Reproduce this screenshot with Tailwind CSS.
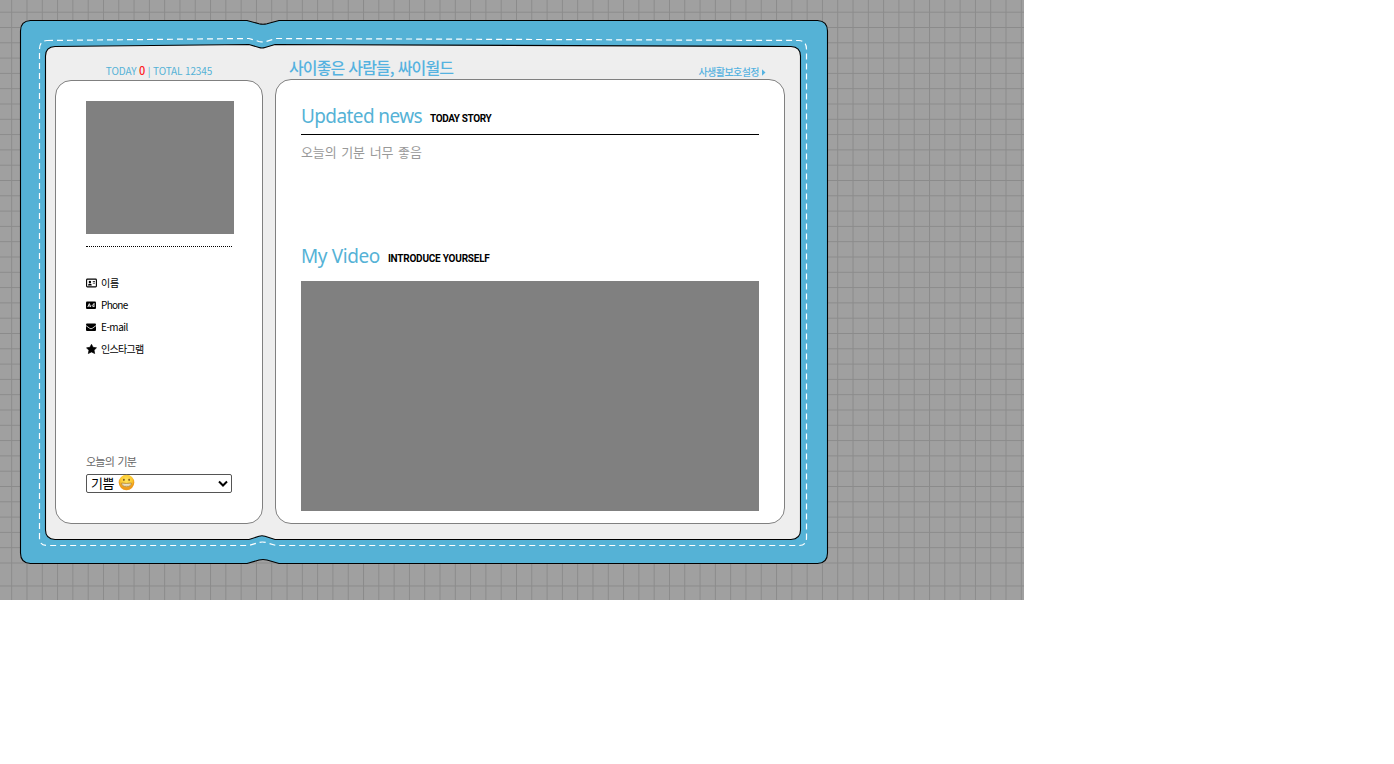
<!DOCTYPE html>
<html lang="ko">
<head>
<meta charset="utf-8">
<title>Mini homepage</title>
<script src="https://cdn.jsdelivr.net/npm/@tailwindcss/browser@4"></script>
</head>
<body class="bg-white overflow-hidden font-['Noto_Sans_CJK_KR',sans-serif]">
<div class="relative w-[1024px] h-[600px] overflow-hidden bg-[#a0a0a0]">
  <svg class="absolute inset-0" width="1024" height="600" fill="none">
    <defs>
      <pattern id="v" x="11.200" y="0" width="15.297" height="600" patternUnits="userSpaceOnUse"><rect width="1" height="600" fill="#8b8b8b"/></pattern>
      <pattern id="h" x="0" y="11.700" width="1024" height="15.300" patternUnits="userSpaceOnUse"><rect width="1024" height="1" fill="#8b8b8b"/></pattern>
    </defs>
    <rect width="1024" height="600" fill="url(#v)"/>
    <rect width="1024" height="565" fill="url(#h)"/>
    <path d="M0 586H1024" stroke="#8b8b8b"/>
    <path d="M30.500 20.500H247L259 23.800Q263 24.800 267 23.800L279 20.500H817.500Q827.500 21 827.500 31V553Q827.500 563 817.500 563.500H279L267 560Q263 559 259 560L247 563.500H30.500Q20.500 563 20.500 553V31Q20.500 21 30.500 20.500Z" fill="#55b2d6" stroke="#000" stroke-width="1.1"/>
    <path d="M47 40.500L249 38.500L259 41.500Q263 42.500 266 41.500L276 38.500L799 40.500Q806.500 41 806.500 49V538Q806.500 545.500 799 545.500H276L266 542.500Q262 541.500 259 542.500L249 545.500H47Q39.500 545.500 39.500 538V49Q39.500 41 47 40.500Z" stroke="#fff" stroke-width="1.2" stroke-dasharray="6 4"/>
    <path d="M55 46.500L249 44.500L259 47.500Q262 48.500 265 47.500L275 44.500L791 46.500Q800.500 47 800.500 56V530Q800.500 539 791 539.500H275L265 536.300Q262 535.300 259 536.300L249 539.500H55Q45.500 539 45.500 530V56Q45.500 47 55 46.500Z" fill="#eee" stroke="#000" stroke-width="1.1"/>
  </svg>

  <main class="relative flex gap-3 pl-[55px] pt-[58px]">
    <aside class="w-[208px]">
      <p class="flex h-[22px] items-center justify-center pt-[2px] text-[10px] leading-none tracking-[-0.13px] text-[#55b2d6] whitespace-pre"><span>TODAY <span class="text-[11px] font-medium text-[#f22]">0</span> | TOTAL 12345</span></p>
      <section class="flex h-[444px] w-[208px] flex-col rounded-[16px] border border-[#808080] bg-white pl-[30px] pt-5">
        <div class="h-[133px] w-[148px] bg-[#808080]"></div>
        <div class="mt-3 w-[146px] border-t border-dotted border-black"></div>
        <ul class="mt-[25px] text-[10px] leading-[22px] text-black">
          <li class="flex h-[22px] items-center gap-1">
            <svg width="11" height="10" viewBox="0 0 11 10"><rect x=".6" y="1.100" width="9.800" height="7.800" rx=".8" fill="none" stroke="#000" stroke-width="1.100"/><circle cx="3.900" cy="3.900" r="1.200"/><path d="M2 7.400Q2 5.500 3.900 5.500T5.800 7.400ZM6.800 3H9V3.800H6.800ZM6.800 4.700H9V5.500H6.800Z"/></svg>
            <span class="tracking-[-0.3px]">이름</span></li>
          <li class="flex h-[22px] items-center gap-1">
            <svg width="11" height="10" viewBox="0 0 11 10"><rect y="1.500" width="10" height="7.500" rx="1"/><path d="M1.800 7L3.300 3.600L4.800 7M2.400 6H4.200M8 3V7M8 5.200A.9 .9 0 1 0 8 6" fill="none" stroke="#fff" stroke-width=".9"/></svg>
            <span class="tracking-[-0.7px]">Phone</span></li>
          <li class="flex h-[22px] items-center gap-1">
            <svg width="11" height="10" viewBox="0 0 11 10"><rect y="1.500" width="10" height="7.500" rx="1"/><path d="M0 3.600L3.700 6.300Q5 7.200 6.300 6.300L10 3.600" fill="none" stroke="#fff" stroke-width=".8"/></svg>
            <span class="tracking-[-0.5px]">E-mail</span></li>
          <li class="flex h-[22px] items-center gap-1">
            <svg width="11" height="10" viewBox="0 0 11 10"><path d="M5.500 .3L7.100 3.300L10.500 3.800L8.100 6.200L8.700 9.600L5.500 8L2.300 9.600L2.900 6.200L.5 3.800L3.900 3.300Z" stroke="#000" stroke-width=".6" stroke-linejoin="round"/></svg>
            <span class="tracking-[-0.7px]">인스타그램</span></li>
        </ul>
        <div class="mt-[93px] flex h-4 items-center text-[11px] leading-4 text-[#666] tracking-[-0.75px] [word-spacing:1px]">오늘의 기분</div>
        <div class="mt-[5px] flex h-[19px] w-[146px] items-center rounded-[2px] border border-[#555] pl-1 pr-[3px] text-[13px] leading-[17px] text-black">
          <span class="relative -top-px tracking-[-0.4px]">기쁨</span>
          <svg class="relative -top-px ml-[4px]" width="17" height="17" viewBox="0 0 17 17"><defs><radialGradient id="g" cy=".35"><stop offset="0" stop-color="#ffe45c"/><stop offset=".75" stop-color="#fcc72e"/><stop offset="1" stop-color="#ee9a1c"/></radialGradient></defs><circle cx="8.500" cy="8.500" r="7.800" fill="url(#g)"/><ellipse cx="5.900" cy="5.800" rx=".8" ry="1.100" fill="#654012"/><ellipse cx="11.100" cy="5.800" rx=".8" ry="1.100" fill="#654012"/><path d="M3.600 9Q8.500 10 13.400 9Q13.100 12.700 8.500 12.700T3.600 9Z" fill="#f4ead0" stroke="#9a6a20" stroke-width=".6"/><path d="M4 10.900Q8.500 11.700 13 10.900" fill="none" stroke="#bfa77a" stroke-width=".5"/></svg>
          <svg class="ml-auto" width="10" height="8" viewBox="0 0 10 8"><path d="M1 1.500L5 5.500L9 1.500" fill="none" stroke="#000" stroke-width="2"/></svg>
        </div>
      </section>
    </aside>

    <section class="w-[510px]">
      <header class="flex h-[21px] items-center justify-between pl-[14px] pr-[19px] text-[#55b2e0]">
        <h1 class="pb-[4px] text-[16px] font-medium leading-5 tracking-[-0.9px] [word-spacing:.5px]">사이좋은 사람들, 싸이월드</h1>
        <span class="flex items-center gap-[3px] pt-[7px] text-[10px] leading-none"><span class="font-medium tracking-[-0.55px]">사생활보호설정</span><svg width="4" height="7" viewBox="0 0 4 7"><path d="M0 .3L3.500 3.500L0 6.700Z" fill="#55b2e0"/></svg></span>
      </header>
      <div class="h-[445px] w-[510px] rounded-[16px] border border-[#808080] bg-white px-[25px] pt-[22px]">
        <h2 class="flex h-[33px] items-center gap-2 border-b border-black pb-[4px] text-[19px] leading-7 text-[#55b2d6]"><span class="font-['Noto_Sans'] tracking-[-0.6px]">Updated news</span><span class="pt-[5px] font-['Roboto'] text-[10px] font-bold leading-none tracking-[-0.4px] text-black">TODAY STORY</span></h2>
        <p class="mt-[7px] text-[13px] leading-5 text-[#999] tracking-[-0.12px] [word-spacing:1.2px]">오늘의 기분 너무 좋음</p>
        <h2 class="mt-[79px] flex h-[30px] items-center gap-2 text-[19px] leading-7 text-[#55b2d6]"><span class="font-['Noto_Sans'] tracking-[-0.4px]">My Video</span><span class="pt-[5px] font-['Roboto'] text-[10px] font-bold leading-none tracking-[-0.22px] text-black">INTRODUCE YOURSELF</span></h2>
        <div class="mt-[10px] h-[230px] bg-[#808080]"></div>
      </div>
    </section>
  </main>
</div>
</body>
</html>
